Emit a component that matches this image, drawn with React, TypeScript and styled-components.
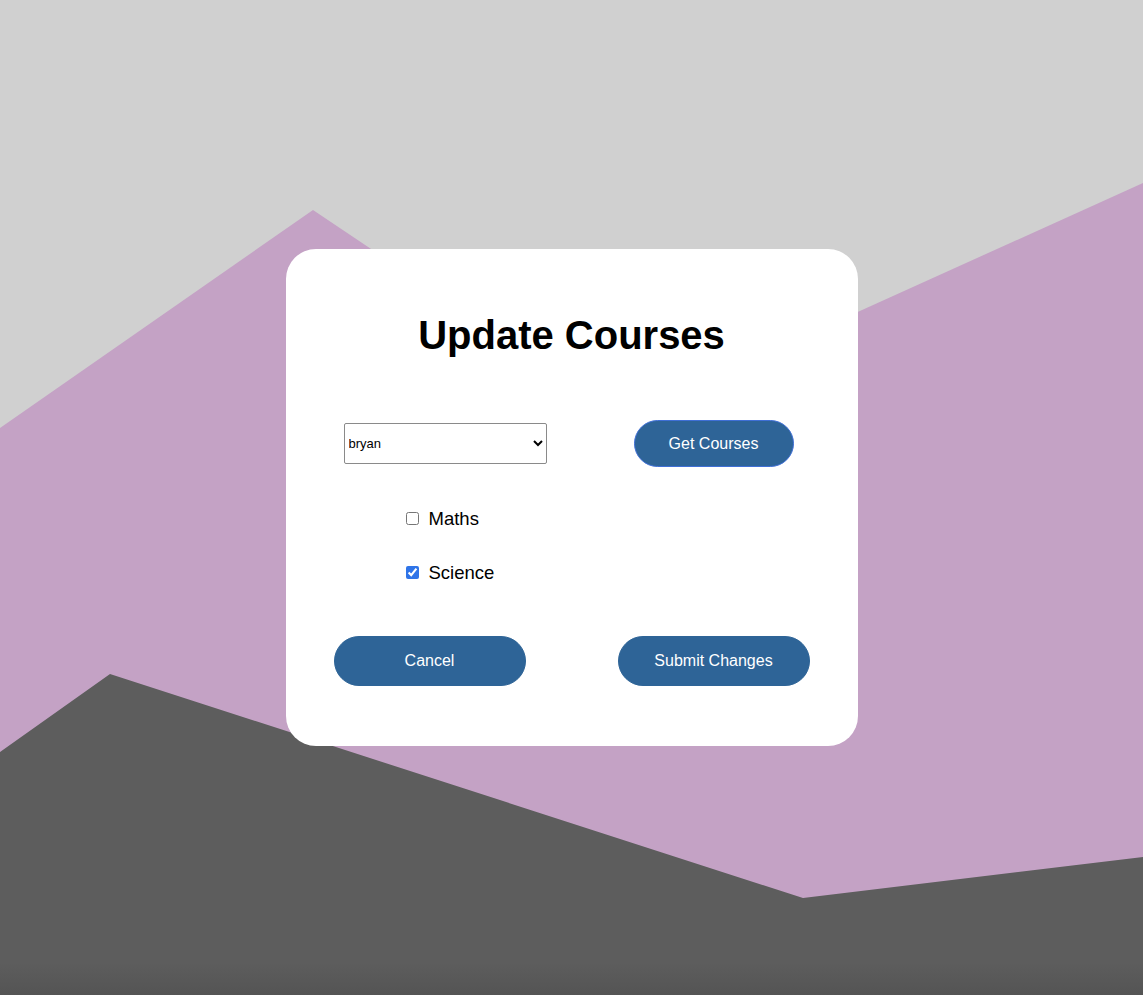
import React, { useState } from "react";
import styled, { createGlobalStyle } from "styled-components";

const GlobalStyle = createGlobalStyle`
  html, body {
    margin: 0;
    padding: 0;
    background: #d0d0d0;
    font-family: "Liberation Sans", Arial, Helvetica, sans-serif;
  }
  * { box-sizing: border-box; }
`;

const Page = styled.main`
  position: relative;
  width: 100%;
  min-height: 100vh;
  display: flex;
  align-items: center;
  justify-content: center;
  overflow: hidden;
  background: #d0d0d0;
`;

const Backdrop = styled.svg`
  position: absolute;
  inset: 0;
  width: 100%;
  height: 100%;
  z-index: 0;
`;

const Card = styled.section`
  position: relative;
  z-index: 1;
  width: 572px;
  height: 497px;
  background: #ffffff;
  border-radius: 30px;
  padding: 63px 48px 0;
  display: flex;
  flex-direction: column;
`;

const Title = styled.h1`
  margin: 0;
  text-align: center;
  font-size: 40px;
  font-weight: 700;
  line-height: 46px;
  color: #000;
`;

const TopRow = styled.div`
  margin-top: 62px;
  height: 47px;
  display: flex;
  align-items: center;
  justify-content: space-between;
  padding: 0 16px 0 10px;
`;

const UserSelect = styled.select`
  width: 203px;
  height: 41px;
  font-family: "Liberation Sans", Arial, sans-serif;
  font-size: 13px;
  color: #000;
  background: #fff;
  border: 1px solid #8a8a8a;
  border-radius: 2px;
  padding: 0;
`;

const PillButton = styled.button<{ $w: number; $h: number; $ring?: boolean }>`
  width: ${(p) => p.$w}px;
  height: ${(p) => p.$h}px;
  border-radius: 999px;
  background: #2e6497;
  color: #ffffff;
  font-family: "Liberation Sans", Arial, sans-serif;
  font-size: 16px;
  border: ${(p) => (p.$ring ? "1.5px solid #3f6fd6" : "1px solid #2e6497")};
  cursor: pointer;
  padding: 0;
`;

const CourseList = styled.div`
  margin-top: 41px;
  padding-left: 72px;
  display: flex;
  flex-direction: column;
  gap: 33px;
`;

const CourseItem = styled.label`
  display: flex;
  align-items: center;
  gap: 10px;
  height: 21px;
  font-size: 18.5px;
  color: #000;
  cursor: pointer;
`;

const Check = styled.input`
  margin: 0;
  width: 13px;
  height: 13px;
  accent-color: #2f74e8;
`;

const BottomRow = styled.div`
  margin-top: 53px;
  display: flex;
  justify-content: space-between;
`;

export default function App() {
  const [courses, setCourses] = useState({ Maths: false, Science: true });
  return (
    <>
      <GlobalStyle />
      <Page>
        <Backdrop viewBox="0 0 1143 995" preserveAspectRatio="none">
          <defs>
            <linearGradient id="shade" x1="0" y1="0" x2="0" y2="1">
              <stop offset="0" stopColor="#5d5d5d" />
              <stop offset="0.9" stopColor="#5d5d5d" />
              <stop offset="1" stopColor="#545454" />
            </linearGradient>
          </defs>
          <rect x="0" y="0" width="1143" height="995" fill="#d0d0d0" />
          <polygon
            points="0,428 313,210 623,418 1143,183 1143,995 0,995"
            fill="#c4a2c5"
          />
          <polygon
            points="0,752 110,674 803,898 1143,857 1143,995 0,995"
            fill="url(#shade)"
          />
        </Backdrop>
        <Card>
          <Title>Update Courses</Title>
          <TopRow>
            <UserSelect defaultValue="bryan">
              <option value="bryan">bryan</option>
            </UserSelect>
            <PillButton $w={160} $h={47} $ring>
              Get Courses
            </PillButton>
          </TopRow>
          <CourseList>
            {(Object.keys(courses) as Array<keyof typeof courses>).map((c) => (
              <CourseItem key={c}>
                <Check
                  type="checkbox"
                  checked={courses[c]}
                  onChange={() => setCourses({ ...courses, [c]: !courses[c] })}
                />
                {c}
              </CourseItem>
            ))}
          </CourseList>
          <BottomRow>
            <PillButton $w={192} $h={50}>Cancel</PillButton>
            <PillButton $w={192} $h={50}>Submit Changes</PillButton>
          </BottomRow>
        </Card>
      </Page>
    </>
  );
}
